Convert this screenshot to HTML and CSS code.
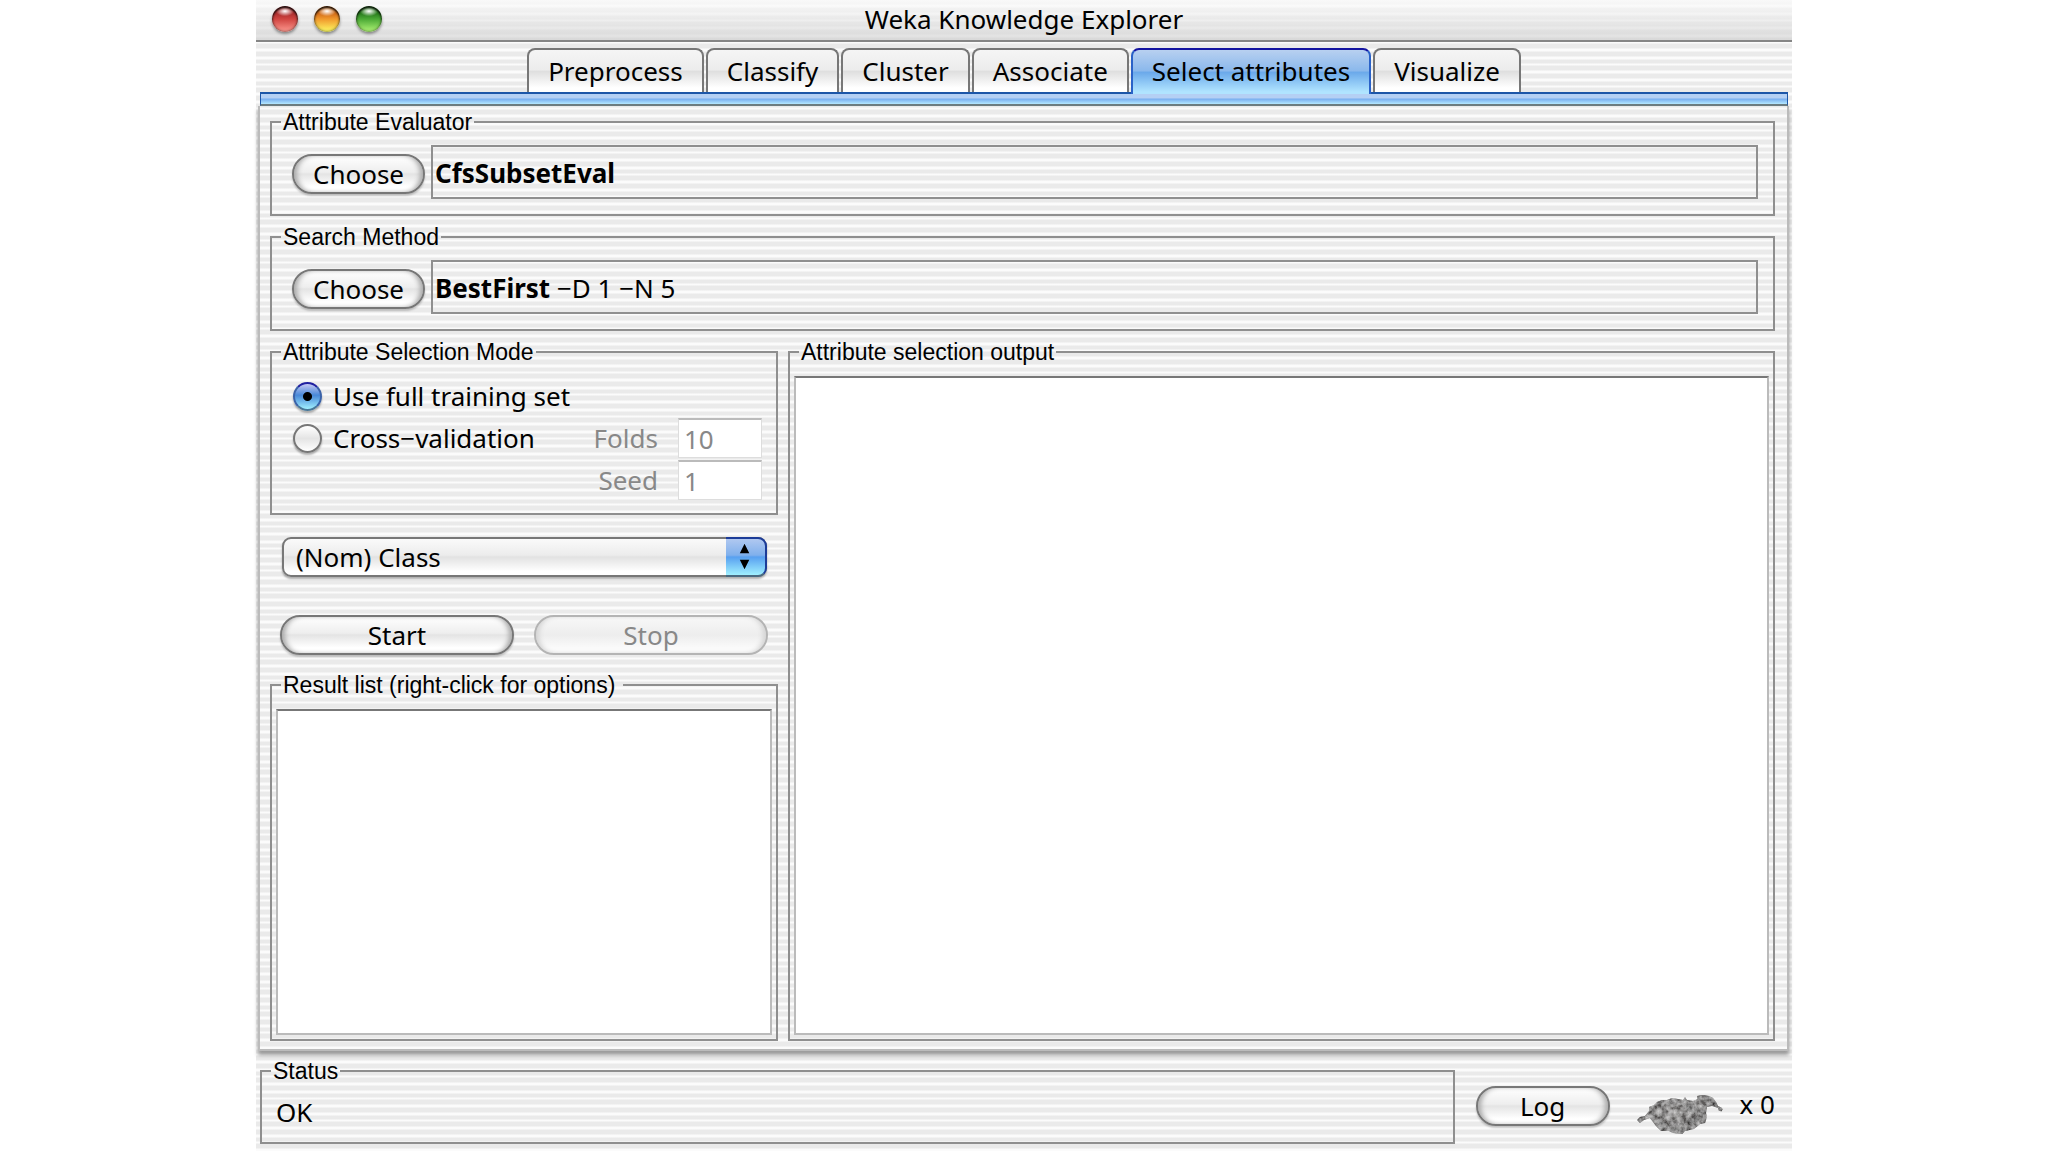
FILE: index.html
```html
<!doctype html>
<html lang="en">
    <head>
        <meta charset="utf-8" />
        <title>Weka Knowledge Explorer</title>
        <link rel="stylesheet" href="styles.css">
    </head>
    <body>
        <div id="window">
            <header class="titlebar">
                <div class="lights">
                    <button class="light red" aria-label="Close"></button>
                    <button class="light yellow" aria-label="Minimize"></button>
                    <button class="light green" aria-label="Zoom"></button>
                </div>
                <h1>Weka Knowledge Explorer</h1>
            </header>

            <nav class="tabs">
                <button class="tab">Preprocess</button>
                <button class="tab">Classify</button>
                <button class="tab">Cluster</button>
                <button class="tab">Associate</button>
                <button class="tab active">Select attributes</button>
                <button class="tab">Visualize</button>
            </nav>
            <div class="bluebar"></div>

            <main class="panel">
                <fieldset class="chooser">
                    <legend>Attribute Evaluator</legend>
                    <div class="choice">
                        <button class="button choose">Choose</button>
                        <div class="scheme"><b>CfsSubsetEval</b></div>
                    </div>
                </fieldset>

                <fieldset class="chooser">
                    <legend>Search Method</legend>
                    <div class="choice">
                        <button class="button choose">Choose</button>
                        <div class="scheme"><b>BestFirst</b> −D 1 −N 5</div>
                    </div>
                </fieldset>

                <div class="columns">
                    <div class="side">
                        <fieldset class="mode">
                            <legend>Attribute Selection Mode</legend>
                            <div class="rows">
                                <div class="row">
                                    <input type="radio" name="mode" id="full" checked />
                                    <label for="full">Use full training set</label>
                                </div>
                                <div class="row">
                                    <input type="radio" name="mode" id="cross" />
                                    <label for="cross">Cross−validation</label>
                                    <label class="num" for="folds">Folds</label>
                                    <input type="text" id="folds" value="10" disabled />
                                </div>
                                <div class="row">
                                    <label class="num" for="seed">Seed</label>
                                    <input type="text" id="seed" value="1" disabled />
                                </div>
                            </div>
                        </fieldset>

                        <div class="popup">
                            <select aria-label="Class attribute">
                                <option>(Nom) Class</option>
                            </select>
                            <svg class="arrows" viewBox="0 0 40 38">
                                <path d="M19 5 L24 15 H14 Z M14 22 H24 L19 32 Z" />
                            </svg>
                        </div>

                        <div class="actions">
                            <button class="button">Start</button>
                            <button class="button" disabled>Stop</button>
                        </div>

                        <fieldset class="list">
                            <legend class="spaced">Result list (right-click for options)</legend>
                            <div class="well"></div>
                        </fieldset>
                    </div>

                    <fieldset class="list output">
                        <legend>Attribute selection output</legend>
                        <div class="well"></div>
                    </fieldset>
                </div>
            </main>

            <footer>
                <fieldset class="status">
                    <legend>Status</legend>
                    <p>OK</p>
                </fieldset>
                <button class="button log">Log</button>
                <svg class="bird" viewBox="0 0 88 40">
                    <defs>
                        <radialGradient id="feathers" cx="0.45" cy="0.45" r="0.6">
                            <stop offset="0" stop-color="#8d8a88" />
                            <stop offset="0.6" stop-color="#615e5d" />
                            <stop offset="1" stop-color="#3a3837" />
                        </radialGradient>
                        <filter id="plumage" x="0" y="0" width="1" height="1">
                            <feTurbulence type="fractalNoise" baseFrequency="0.2" numOctaves="3" seed="4" />
                            <feColorMatrix values="1.6 0 0 0 -0.4  1.6 0 0 0 -0.4  1.6 0 0 0 -0.4  0 0 0 0 0.5" />
                            <feComposite operator="in" in2="SourceGraphic" result="grain" />
                            <feMerge>
                                <feMergeNode in="SourceGraphic" />
                                <feMergeNode in="grain" />
                            </feMerge>
                        </filter>
                    </defs>
                    <g filter="url(#plumage)">
                        <path fill="url(#feathers)" d="M0 25 L3 22 L8 21 L12 16 L12 12 L17 10 L20 7 L25 5 L30 5 L35 3 L41 4 L46 5 L48 2 L50 5 L56 6 L61 4 L60 1 L65 0 L72 1 L76 3 L79 7 L81 11 L85 13 L85 16 L82 16 L81 13 L75 11 L70 12 L69 18 L70 22 L68 28 L63 29 L57 34 L48 36 L45 39 L36 38 L32 36 L24 36 L19 31 L16 27 L13 23 L7 25 L3 28 Z" />
                        <path fill="#a5a3a2" d="M60 3 L68 2 L73 5 L72 9 L66 9 L62 13 L60 10 Z M28 10 L34 8 L36 13 L31 15 Z M38 16 L44 14 L45 21 L38 25 L34 21 Z M5 23 L11 20 L12 22 L5 25 Z" opacity="0.5" />
                        <path fill="#1c1a1a" d="M46 8 L54 9 L60 14 L58 19 L51 16 Z M20 26 L28 28 L31 33 L24 33 Z M48 25 L60 22 L63 25 L54 31 Z M82 12 L86 14 L84 17 Z M68 3 L70 4 L69 6 Z" opacity="0.6" />
                    </g>
                </svg>
                <span class="count">x 0</span>
            </footer>
        </div>
    </body>
</html>
```
FILE: styles.css
```css
* {
    margin: 0;
    padding: 0;
    box-sizing: border-box;
}

body {
    background: #fff;
    color: #000;
    font: 26px/30px "Noto Sans", "Lucida Grande", sans-serif;
}

button, input, select {
    font: inherit;
    color: inherit;
    border: 0;
    outline: 0;
}

/* three pinstripes in every 22px */
#window {
    width: 75%;
    min-height: calc(100vh - 1px);
    margin: 0 auto;
    display: flex;
    flex-direction: column;
    background: repeating-linear-gradient(
        #eaeaea 0, #eaeaea 4px, #fbfbfb 5px, #fbfbfb 7px,
        #eaeaea 8px, #eaeaea 12px, #fbfbfb 13px, #fbfbfb 15px,
        #eaeaea 16px, #eaeaea 19px, #fbfbfb 20px, #fbfbfb 21px, #eaeaea 22px);
}

/* title bar */
.titlebar {
    position: relative;
    height: 42px;
    border-bottom: 2px solid #858585;
    background: linear-gradient(rgba(255, 255, 255, 0.7), rgba(205, 205, 205, 0.6));
}

.titlebar h1 {
    font-size: 26px;
    font-weight: normal;
    line-height: 38px;
    text-align: center;
}

.lights {
    position: absolute;
    top: 6px;
    left: 16px;
    display: flex;
    gap: 16px;
}

.light {
    width: 26px;
    height: 26px;
    border-radius: 50%;
    box-shadow: inset 0 2px 2px rgba(0, 0, 0, 0.8), inset 0 0 3px rgba(0, 0, 0, 0.7), 0 2px 3px rgba(0, 0, 0, 0.4);
}

.red {
    background: radial-gradient(ellipse 9px 5px at 50% 20%, #fff, transparent), linear-gradient(#b03030 30%, #d04440 50%, #ff9c92);
}

.yellow {
    background: radial-gradient(ellipse 9px 5px at 50% 20%, #fff, transparent), linear-gradient(#d5701c 30%, #f0982c 50%, #ffff66);
}

.green {
    background: radial-gradient(ellipse 9px 5px at 50% 20%, #fff, transparent), linear-gradient(#2c8020 30%, #4aa835 50%, #b4f878);
}

/* tabs */
.tabs {
    display: flex;
    justify-content: center;
    gap: 2px;
    padding-top: 6px;
}

.tab {
    height: 44px;
    padding: 0 19px;
    border: 2px solid #777;
    border-bottom: 0;
    border-radius: 8px 8px 0 0;
    background: linear-gradient(#f5f5f5, #ececec 48%, #dedede 50%, #fff 90%);
}

.tab.active {
    position: relative;
    height: 46px;
    margin-bottom: -2px;
    padding-bottom: 2px;
    border-color: #1414a0 #2a62c8;
    background: linear-gradient(#b8d0f0, #8ab8ec 48%, #6aa8ea 50%, #b0e4ff 95%);
}

.bluebar {
    height: 14px;
    margin: 0 4px;
    border: 2px solid #1c56a8;
    border-width: 2px 1px;
    border-bottom-color: #6c7c80;
    background: linear-gradient(#b4d0f4 40%, #78aef0 50%, #b4e8ff);
}

/* panel */
.panel {
    flex: 1;
    display: flex;
    flex-direction: column;
    gap: 9px;
    margin: 0 3px 0 2px;
    padding: 4px 12px 8px 10px;
    border: 2px solid #bbb;
    border-top: 0;
    box-shadow: 0 4px 4px #999;
}

fieldset {
    min-width: 0;
    border: 2px solid #8f8f8f;
}

legend {
    margin-left: 9px;
    padding: 0 2px;
    font: 23px/24px "Liberation Sans", Arial, sans-serif;
}

legend.spaced {
    padding-right: 8px;
}

.button {
    height: 40px;
    border: 2px solid #777;
    border-radius: 20px;
    background: linear-gradient(#fff, #eee 45%, #e4e4e4 50%, #fff 85%);
    box-shadow: inset 5px 0 5px -2px #aaa, inset -5px 0 5px -2px #aaa, 0 2px 2px rgba(0, 0, 0, 0.2);
}

.button:disabled {
    border-color: #b4b4b4;
    background: linear-gradient(#f8f8f8, #ededed 50%, #fafafa 85%);
    box-shadow: inset 5px 0 5px -2px #d4d4d4, inset -5px 0 5px -2px #d4d4d4;
    color: #888;
}

.chooser {
    height: 106px;
}

.choice {
    display: flex;
    align-items: center;
    gap: 6px;
    padding: 11px 15px 0 20px;
}

.choose {
    width: 133px;
    margin-top: 4px;
}

.scheme {
    flex: 1;
    height: 54px;
    padding-left: 2px;
    border: 2px solid #8f8f8f;
    line-height: 52px;
}

.columns {
    flex: 1;
    display: flex;
    gap: 10px;
}

.side {
    width: 508px;
    display: flex;
    flex-direction: column;
}

.mode {
    height: 175px;
}

.rows {
    padding: 11px 14px 0 21px;
}

.row {
    display: flex;
    align-items: center;
    height: 42px;
}

input[type=radio] {
    appearance: none;
    width: 29px;
    height: 29px;
    margin-right: 11px;
    border: 2px solid #777;
    border-radius: 50%;
    background: linear-gradient(#fff, #e4e4e4 50%, #fff);
    box-shadow: 0 2px 2px rgba(0, 0, 0, 0.3);
}

input[type=radio]:checked {
    border-color: #2020a0 #3a62a8 #4a7898;
    background: radial-gradient(circle at 50% 50%, #000 4px, transparent 5px), linear-gradient(#c4c8f4, #4888d8 45%, #a0f0ff);
}

.num {
    margin-left: auto;
    margin-right: 20px;
    color: #888;
}

input[type=text] {
    width: 84px;
    height: 40px;
    padding-left: 5px;
    border: 1px solid #ddd;
    border-top: 2px solid #bbb;
    background: #fff;
    color: #888;
}

.popup {
    position: relative;
    margin: 22px 11px 0 12px;
}

.popup select {
    appearance: none;
    display: block;
    width: 100%;
    height: 40px;
    padding: 0 48px 0 12px;
    border: 2px solid #777;
    border-radius: 9px;
    background: linear-gradient(#fafafa, #ececec 45%, #e2e2e2 50%, #fff 90%);
    box-shadow: 0 2px 2px rgba(0, 0, 0, 0.3);
}

.arrows {
    position: absolute;
    top: 0;
    right: 0;
    width: 41px;
    height: 40px;
    border: 2px solid #1c3c98;
    border-bottom-color: #4a6a80;
    border-left: 0;
    border-radius: 0 9px 9px 0;
    background: linear-gradient(#b0c8f0, #80b0ec 45%, #58a0f0 50%, #a0f0ff);
    pointer-events: none;
}

.actions {
    display: flex;
    gap: 20px;
    margin: 38px 10px 18px;
}

.actions .button {
    flex: 1;
}

.list {
    flex: 1;
    display: flex;
    padding: 12px 4px 4px;
}

.list legend {
    margin-left: 5px;
}

.well {
    flex: 1;
    border: 2px solid #bbb;
    border-top-color: #777;
    background: #fff;
}

/* status line */
footer {
    display: flex;
    align-items: center;
    padding: 8px 17px 7px 4px;
}

.status {
    flex: 1;
    height: 85px;
}

.status p {
    padding: 14px 14px 0;
}

.log {
    width: 134px;
    margin: 8px 27px 0 21px;
}

.bird {
    width: 88px;
    height: 40px;
    margin: 26px 15px 0 0;
}

.count {
    margin-top: 4px;
}
```
